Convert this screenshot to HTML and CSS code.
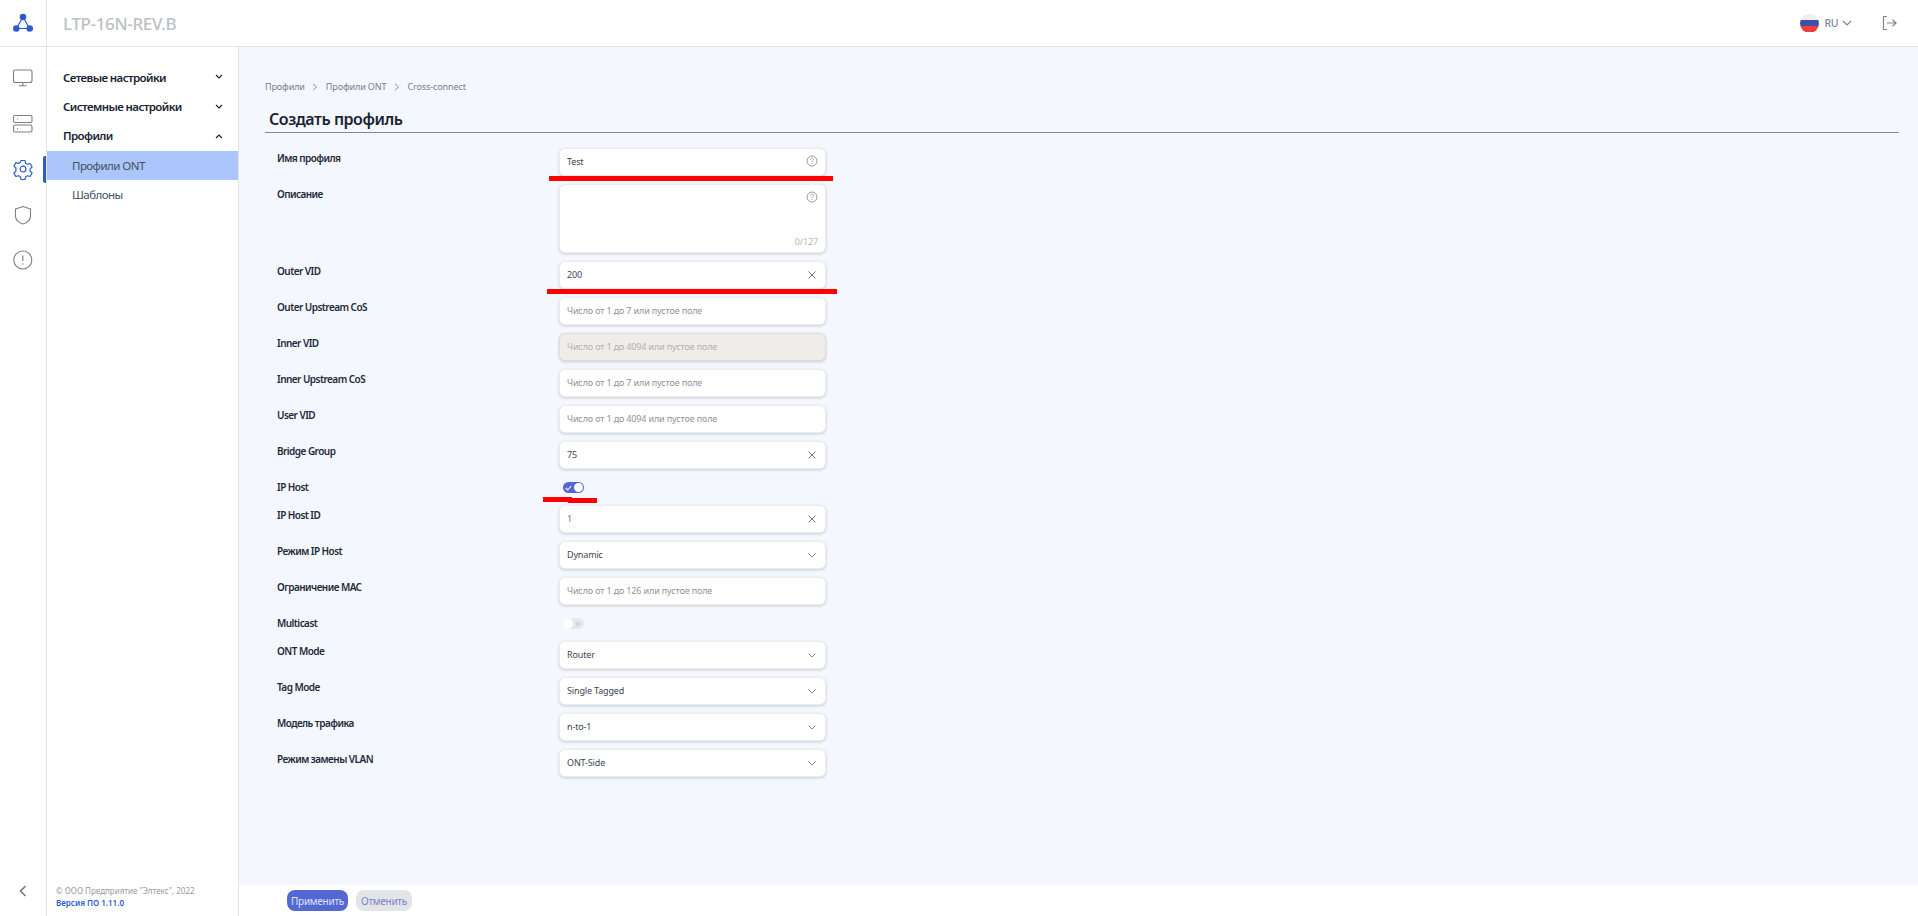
FILE: index.html
```html
<!DOCTYPE html>
<html lang="ru">
<head>
<meta charset="utf-8">
<title>LTP-16N-REV.B</title>
<link rel="stylesheet" href="styles.css">
</head>
<body>
<div class="app">
  <header class="topbar">
    <div class="logo-cell">
      <svg width="22" height="22" viewBox="0 0 22 22"><path d="M11 5 L4.500 16.500 H17.500 Z" fill="none" stroke="#2f5bd0" stroke-width="1.200"/><circle cx="11" cy="5" r="3.300" fill="#2f5bd0"/><circle cx="4.300" cy="16.500" r="3.300" fill="#2f5bd0"/><circle cx="17.700" cy="16.500" r="3.300" fill="#2f5bd0"/></svg>
    </div>
    <div class="device">LTP-16N-REV.B</div>
    <div class="lang">
      <span class="flag"><i class="f-white"></i><i class="f-blue"></i><i class="f-red"></i></span>
      <span class="lang-code">RU</span>
      <svg width="10" height="6" viewBox="0 0 10 6"><path d="M1 1l4 4 4-4" fill="none" stroke="#7d8794" stroke-width="1.200"/></svg>
    </div>
    <svg class="logout" width="16" height="16" viewBox="0 0 16 16"><path d="M6 1.500H2.500v13H6" fill="none" stroke="#7d8794" stroke-width="1.200"/><path d="M6 8h9M11.500 4.800 15 8l-3.500 3.200" fill="none" stroke="#7d8794" stroke-width="1.200"/></svg>
  </header>

  <div class="body">
    <nav class="rail">
      <div class="rail-icons">
        <svg class="ri" width="22" height="22" viewBox="0 0 22 22"><rect x="1.500" y="3" width="18.500" height="12.500" rx="2" fill="none" stroke="#7f7f7f" stroke-width="1.100"/><path d="M10.800 15.500v3M7 18.800h7.600" fill="none" stroke="#7f7f7f" stroke-width="1.100"/></svg>
        <svg class="ri" width="22" height="22" viewBox="0 0 22 22"><rect x="1.500" y="2.500" width="18.500" height="7" rx="1.500" fill="none" stroke="#7f7f7f" stroke-width="1.100"/><rect x="1.500" y="12" width="18.500" height="7" rx="1.500" fill="none" stroke="#7f7f7f" stroke-width="1.100"/><path d="M5 6h1M5 15.500h1" stroke="#7f7f7f"/></svg>
        <svg class="ri" width="22" height="22" viewBox="0 0 22 22"><path d="M9 2.500h4l.6 2.700 1.900 1.100 2.600-.8 2 3.500-2 1.900v2.200l2 1.900-2 3.500-2.600-.8-1.900 1.100-.6 2.700H9l-.6-2.700-1.900-1.100-2.600.8-2-3.500 2-1.900V10l-2-1.900 2-3.500 2.600.8 1.900-1.100z" fill="none" stroke="#2f5bd0" stroke-width="1.200" stroke-linejoin="round"/><circle cx="11" cy="11.100" r="2.900" fill="none" stroke="#2f5bd0" stroke-width="1.200"/></svg>
        <svg class="ri" width="22" height="22" viewBox="0 0 22 22"><path d="M11 2.500 18.500 5v7c0 4-3.500 6.700-7.500 8-4-1.300-7.500-4-7.500-8V5z" fill="none" stroke="#7f7f7f" stroke-width="1.100" stroke-linejoin="round"/></svg>
        <svg class="ri" width="22" height="22" viewBox="0 0 22 22"><circle cx="10.800" cy="11" r="9" fill="none" stroke="#7f7f7f" stroke-width="1.100"/><path d="M10.800 6.500v5.500M10.800 14.500v1" stroke="#7f7f7f" stroke-width="1.200"/></svg>
      </div>
      <span class="active-mark"></span>
      <svg class="collapse" width="10" height="14" viewBox="0 0 10 14"><path d="M7.500 2 2.500 7l5 5" fill="none" stroke="#777" stroke-width="1.600"/></svg>
    </nav>

    <aside class="sidebar">
      <ul class="menu">
        <li class="menu-head"><span>Сетевые настройки</span><svg width="8" height="6" viewBox="0 0 8 6"><path d="M1 1l3 3 3-3" fill="none" stroke="#222" stroke-width="1.200"/></svg></li>
        <li class="menu-head"><span>Системные настройки</span><svg width="8" height="6" viewBox="0 0 8 6"><path d="M1 1l3 3 3-3" fill="none" stroke="#222" stroke-width="1.200"/></svg></li>
        <li class="menu-head"><span>Профили</span><svg width="8" height="6" viewBox="0 0 8 6"><path d="M1 5l3-3 3 3" fill="none" stroke="#222" stroke-width="1.200"/></svg></li>
        <li class="menu-sub active">Профили ONT</li>
        <li class="menu-sub">Шаблоны</li>
      </ul>
      <div class="copy">
        <p class="copyright">© ООО Предприятие "Элтекс", 2022</p>
        <p class="version">Версия ПО 1.11.0</p>
      </div>
    </aside>

    <div class="content">
      <main class="main">
        <div class="crumbs">
          <span>Профили</span>
          <svg width="6" height="8" viewBox="0 0 6 8"><path d="M1 .8 4.500 4 1 7.200" fill="none" stroke="#888" stroke-width=".9"/></svg>
          <span>Профили ONT</span>
          <svg width="6" height="8" viewBox="0 0 6 8"><path d="M1 .8 4.500 4 1 7.200" fill="none" stroke="#888" stroke-width=".9"/></svg>
          <span>Cross-connect</span>
        </div>
        <h1 class="title">Создать профиль</h1>
        <form class="form">
          <div class="row"><label>Имя профиля</label><div class="field"><span class="value">Test</span><svg class="ic" width="12" height="12" viewBox="0 0 12 12"><circle cx="6" cy="6" r="5" fill="none" stroke="#999" stroke-width="1"/><path d="M4.500 4.800c0-2 3-2 3-.2 0 1.100-1.500 1.100-1.500 2.400M6 8v1" fill="none" stroke="#999" stroke-width=".9"/></svg></div><span class="mark mark-a"></span></div>
          <div class="row"><label>Описание</label><div class="field area"><svg class="ic" width="12" height="12" viewBox="0 0 12 12"><circle cx="6" cy="6" r="5" fill="none" stroke="#999" stroke-width="1"/><path d="M4.500 4.800c0-2 3-2 3-.2 0 1.100-1.500 1.100-1.500 2.400M6 8v1" fill="none" stroke="#999" stroke-width=".9"/></svg><span class="count">0/127</span></div></div>
          <div class="row"><label>Outer VID</label><div class="field"><span class="value">200</span><svg class="ic ic-x" width="12" height="12" viewBox="0 0 12 12"><path d="M2.500 2.500l7 7M9.500 2.500l-7 7" stroke="#777" stroke-width="1"/></svg></div><span class="mark mark-b"></span></div>
          <div class="row"><label>Outer Upstream CoS</label><div class="field"><span class="ph">Число от 1 до 7 или пустое поле</span></div></div>
          <div class="row"><label>Inner VID</label><div class="field disabled"><span class="ph">Число от 1 до 4094 или пустое поле</span></div></div>
          <div class="row"><label>Inner Upstream CoS</label><div class="field"><span class="ph">Число от 1 до 7 или пустое поле</span></div></div>
          <div class="row"><label>User VID</label><div class="field"><span class="ph">Число от 1 до 4094 или пустое поле</span></div></div>
          <div class="row"><label>Bridge Group</label><div class="field"><span class="value">75</span><svg class="ic ic-x" width="12" height="12" viewBox="0 0 12 12"><path d="M2.500 2.500l7 7M9.500 2.500l-7 7" stroke="#777" stroke-width="1"/></svg></div></div>
          <div class="row row-toggle"><label>IP Host</label><div class="toggle on"><svg width="7" height="6" viewBox="0 0 7 6"><path d="M.8 3l2 2L6.200 1" fill="none" stroke="#fff" stroke-width="1.100"/></svg><i class="knob"></i></div><span class="mark mark-c"></span><span class="mark mark-d"></span></div>
          <div class="row"><label>IP Host ID</label><div class="field"><span class="value id-value">1</span><svg class="ic ic-x" width="12" height="12" viewBox="0 0 12 12"><path d="M2.500 2.500l7 7M9.500 2.500l-7 7" stroke="#777" stroke-width="1"/></svg></div></div>
          <div class="row"><label>Режим IP Host</label><div class="field"><span class="value">Dynamic</span><svg class="ic ic-x" width="12" height="12" viewBox="0 0 12 12"><path d="M2.500 4.500 6 8l3.500-3.500" fill="none" stroke="#888" stroke-width="1"/></svg></div></div>
          <div class="row"><label>Ограничение MAC</label><div class="field"><span class="ph">Число от 1 до 126 или пустое поле</span></div></div>
          <div class="row row-toggle"><label>Multicast</label><div class="toggle off"><i class="knob"></i><i class="ring"></i></div></div>
          <div class="row"><label>ONT Mode</label><div class="field"><span class="value">Router</span><svg class="ic ic-x" width="12" height="12" viewBox="0 0 12 12"><path d="M2.500 4.500 6 8l3.500-3.500" fill="none" stroke="#888" stroke-width="1"/></svg></div></div>
          <div class="row"><label>Tag Mode</label><div class="field"><span class="value">Single Tagged</span><svg class="ic ic-x" width="12" height="12" viewBox="0 0 12 12"><path d="M2.500 4.500 6 8l3.500-3.500" fill="none" stroke="#888" stroke-width="1"/></svg></div></div>
          <div class="row"><label>Модель трафика</label><div class="field"><span class="value">n-to-1</span><svg class="ic ic-x" width="12" height="12" viewBox="0 0 12 12"><path d="M2.500 4.500 6 8l3.500-3.500" fill="none" stroke="#888" stroke-width="1"/></svg></div></div>
          <div class="row"><label>Режим замены VLAN</label><div class="field"><span class="value">ONT-Side</span><svg class="ic ic-x" width="12" height="12" viewBox="0 0 12 12"><path d="M2.500 4.500 6 8l3.500-3.500" fill="none" stroke="#888" stroke-width="1"/></svg></div></div>
        </form>
      </main>
      <footer class="actions">
        <button class="btn primary" type="button">Применить</button>
        <button class="btn secondary" type="button">Отменить</button>
      </footer>
    </div>
  </div>
</div>
</body>
</html>
```
FILE: styles.css
```css
* { box-sizing: border-box; }
html, body { margin: 0; height: 100%; }
body { font-family: "Noto Sans", "Open Sans", sans-serif; color: #1f2a37; background: #fff; overflow: hidden; }
.app { width: 1918px; height: 916px; display: flex; flex-direction: column; }

.topbar { height: 47px; flex: none; display: flex; align-items: center; border-bottom: 1px solid #e3e3e3; background: #fff; }
.logo-cell { width: 47px; height: 46px; display: flex; align-items: center; justify-content: center; padding-right: 1px; border-right: 1px solid #e3e3e3; }
.device { margin-left: 16px; font-size: 17px; font-weight: 500; letter-spacing: -.35px; color: #bcbfc4; flex: 1; }
.lang { display: flex; align-items: center; gap: 5px; margin-right: 29px; }
.flag { width: 19px; height: 19px; border-radius: 50%; overflow: hidden; display: flex; flex-direction: column; }
.flag i { flex: 1; display: block; }
.f-white { background: #eeeeee; }
.f-blue { background: #3f51a5; }
.f-red { background: #f03e3e; }
.lang-code { margin: 0 -1px 0 1px; font-size: 10.500px; font-weight: 500; letter-spacing: -.5px; color: #7d8794; }
.logout { margin-right: 21px; }

.body { flex: 1; display: flex; min-height: 0; }
.rail { width: 47px; flex: none; border-right: 1px solid #e3e3e3; background: #fff; position: relative; display: flex; flex-direction: column; align-items: center; padding: 20px 1px 18px 0; }
.rail-icons { display: flex; flex-direction: column; gap: 23.500px; flex: 1; }
.ri { display: block; }
.active-mark { position: absolute; right: 0; top: 109px; width: 3px; height: 27px; background: #2f5bd0; border-radius: 2px 0 0 2px; }

.sidebar { width: 192px; flex: none; border-right: 1px solid #e3e3e3; background: #fff; display: flex; flex-direction: column; justify-content: space-between; }
.menu { list-style: none; margin: 0; padding: 15.500px 0 0; }
.menu-head { height: 29.400px; display: flex; align-items: center; justify-content: space-between; padding: 0 15px 0 16px; font-size: 11.500px; font-weight: 600; letter-spacing: -.6px; color: #1a2433; }
.menu-sub { height: 29px; display: flex; align-items: center; padding-left: 25px; font-size: 11.500px; letter-spacing: -.55px; color: #44505e; }
.menu-sub.active { background: #abc6fb; }
.copy { padding: 0 0 8px 9px; }
.copy p { margin: 0; font-size: 8px; line-height: 11.500px; }
.copyright { color: #9a9a9a; }
.version { color: #2f5bd0; font-weight: 600; }

.content { flex: 1; min-width: 0; display: flex; flex-direction: column; background: #f4f7fe; }
.main { flex: 1; min-height: 0; padding: 33px 19px 0 26px; }
.crumbs { display: flex; align-items: center; gap: 7.500px; height: 13px; font-size: 9px; letter-spacing: -.1px; color: #777f88; }
.title { margin: 13px 0 0; padding: 0 0 0 4px; height: 27px; font-size: 16px; line-height: 26px; font-weight: 600; letter-spacing: -.45px; color: #1a2433; border-bottom: 1px solid #85888c; }
.form { padding-top: 15px; }
.row { position: relative; display: grid; grid-template-columns: 282px 267px; padding-left: 12px; margin-bottom: 8px; }
.row label { font-size: 10px; font-weight: 600; letter-spacing: -.55px; line-height: 21px; color: #1f2a37; }
.row-toggle { height: 20px; }
.field { height: 28px; position: relative; display: flex; align-items: center; justify-content: space-between; padding: 0 7px 2px 7px; background: #fff; border: 1px solid #ececec; border-radius: 6px; box-shadow: 0 1px 3px rgba(0,0,0,.18); font-size: 9px; letter-spacing: -.15px; }
.field.area { height: 69px; align-items: flex-start; justify-content: flex-end; padding-top: 6px; }
.field.disabled { background: #f0ecea; border-color: #dddddd; }
.field.disabled .ph { color: #b0b0b0; }
.value { color: #3c4654; }
.id-value { color: #6a7a8e; }
.ph { color: #8f939b; }
.count { position: absolute; right: 7px; bottom: 4px; font-size: 9px; color: #b9b9b9; }
.ic { flex: none; }
.ic-x { margin-top: 2px; }

.toggle { position: relative; margin: 5px 0 0 4px; width: 21px; height: 11px; border-radius: 6px; display: flex; align-items: center; }
.toggle.on { background: #5468d4; padding-left: 2px; }
.toggle.off { background: #e6e8ee; }
.toggle .knob { position: absolute; width: 9px; height: 9px; border-radius: 50%; background: #fff; top: 1px; }
.toggle.on .knob { right: 1px; }
.toggle.off .knob { left: 0; top: 0; width: 10px; height: 11px; }
.toggle .ring { position: absolute; right: 4px; top: 4px; width: 4px; height: 4px; border-radius: 50%; border: 1px solid #c4c7cc; }

.mark { position: absolute; background: #ff0000; }
.mark-a { left: 284px; top: 28px; width: 284px; height: 5px; }
.mark-b { left: 282px; top: 28px; width: 290px; height: 5px; }
.mark-c { left: 278px; top: 20px; width: 28.500px; height: 5px; }
.mark-d { left: 303px; top: 21px; width: 29px; height: 4.500px; }

.actions { height: 31px; flex: none; background: #fff; display: flex; align-items: center; gap: 8px; padding-left: 48px; }
.btn { height: 21px; border: 0; border-radius: 8px; font-family: inherit; font-size: 10px; letter-spacing: -.25px; padding: 0; }
.primary { width: 61px; background: #5468d4; color: #dfe4f8; }
.secondary { width: 56px; background: #e3e4e8; color: #7a83c8; }
```
